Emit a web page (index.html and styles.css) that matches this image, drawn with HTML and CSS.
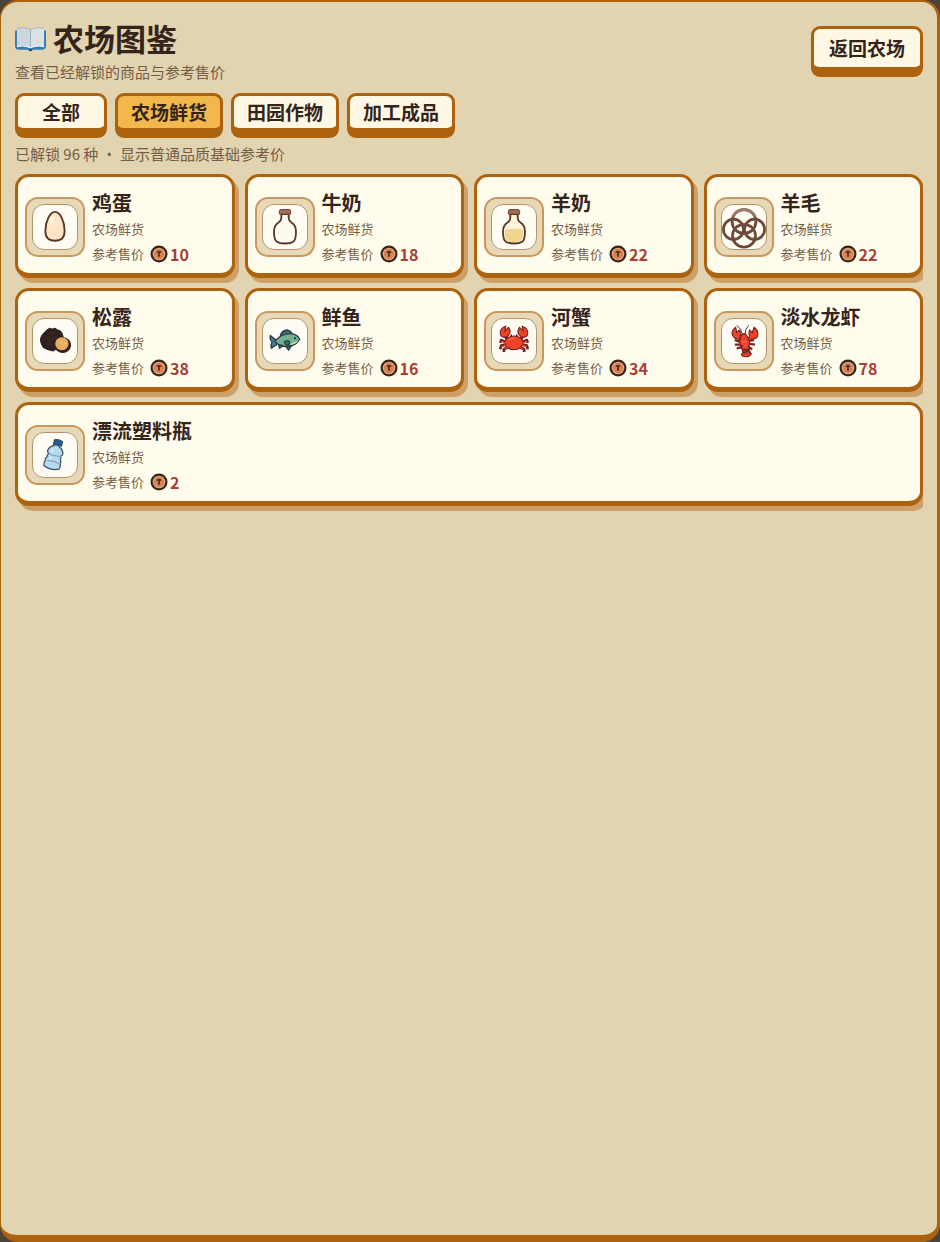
FILE: index.html
```html
<!DOCTYPE html>
<html lang="zh-CN">
<head>
<meta charset="utf-8">
<meta name="viewport" content="width=device-width, initial-scale=1">
<title>农场图鉴</title>
<link rel="stylesheet" href="styles.css">
</head>
<body>
<svg class="defs" aria-hidden="true">
  <symbol id="coin" viewBox="0 0 18 18">
    <circle cx="9" cy="9" r="8.5" fill="#35241a"/>
    <circle cx="9" cy="9" r="6.300" fill="#e9a777"/>
    <circle cx="9" cy="9" r="4.700" fill="#dc8259" stroke="#c06f4a" stroke-width=".6"/>
    <path d="M6.300 8q.2-2.200 2.700-2.200t2.700 2.200q-1-.5-1.800 0v3.700H8.100V8q-.8-.5-1.800 0z" fill="#54301f"/>
  </symbol>
</svg>
<main class="panel">
  <header class="header">
    <div class="heading">
      <h1 class="title">
        <svg class="book" viewBox="0 0 32 28" aria-hidden="true">
          <path d="M1 5Q0 5 0 7v14q0 4 4 4h9q3 2 6 0h9q4 0 4-4V7q0-2-1-2z" fill="#347fae"/>
          <path d="M14.500 24.500h3v2h-3z" fill="#204f70"/>
          <path d="M2 3Q9 1 16 4v19Q9 20 2 22z" fill="#cdd6df"/>
          <path d="M30 3Q23 1 16 4v19q7-3 14-1z" fill="#dae1e7"/>
          <path d="M2 22q7-2 14 1 7-3 14-1" fill="none" stroke="#f0f4f7" stroke-width="1.200"/>
          <path d="M16 4v18M2 3Q9 1 16 4q7-3 14-1" fill="none" stroke="#9aabb8" stroke-width=".8"/>
        </svg>
        <span>农场图鉴</span>
      </h1>
      <p class="subtitle">查看已经解锁的商品与参考售价</p>
    </div>
    <button class="button button-back" type="button">返回农场</button>
  </header>
  <nav class="tabs" aria-label="商品分类">
    <button class="button" type="button">全部</button>
    <button class="button button-active" type="button" aria-pressed="true">农场鲜货</button>
    <button class="button" type="button">田园作物</button>
    <button class="button" type="button">加工成品</button>
  </nav>
  <p class="summary">已解锁 96 种 ・ 显示普通品质基础参考价</p>
  <section class="cards">
    <article class="card">
      <div class="frame"><svg class="icon" viewBox="0 0 48 48" aria-hidden="true">
        <path d="M24 7.500C18 7.500 13.500 19 13.500 28c0 8 4 11 10.500 11s10.500-3 10.500-11C34.500 19 30 7.500 24 7.500z" fill="#fde5c6" stroke="#5b3427" stroke-width="2"/>
        <path d="M19 17q2-5 4-5 1 5-5 12z" fill="#fff8e9"/>
      </svg></div>
      <div class="info"><h2 class="name">鸡蛋</h2><p class="kind">农场鲜货</p><p class="price">参考售价<svg class="coin"><use href="#coin"/></svg><strong>10</strong></p></div>
    </article>
    <article class="card">
      <div class="frame"><svg class="icon" viewBox="0 0 48 48" aria-hidden="true">
        <path d="M20 10v4q0 3-3 5-5 3-5 10 0 9 3 11 3 2 9 2t9-2q3-2 3-11 0-7-5-10-3-2-3-5v-4z" fill="#fffaf0" stroke="#5b3427" stroke-width="2"/>
        <path d="M19.500 5h9q2.500 0 1.500 5H18q-1-5 1.500-5z" fill="#a56e58" stroke="#64392b"/>
      </svg></div>
      <div class="info"><h2 class="name">牛奶</h2><p class="kind">农场鲜货</p><p class="price">参考售价<svg class="coin"><use href="#coin"/></svg><strong>18</strong></p></div>
    </article>
    <article class="card">
      <div class="frame"><svg class="icon" viewBox="0 0 48 48" aria-hidden="true">
        <path d="M20 10v4q0 3-3 5-5 3-5 10 0 9 3 11 3 2 9 2t9-2q3-2 3-11 0-7-5-10-3-2-3-5v-4z" fill="#fff5da"/>
        <path d="M14 27q10-2 20 0 0 10-2 12-8 3-16 0-2-2-2-12z" fill="#f1d68e"/>
        <path d="M20 10v4q0 3-3 5-5 3-5 10 0 9 3 11 3 2 9 2t9-2q3-2 3-11 0-7-5-10-3-2-3-5v-4z" fill="none" stroke="#5b3427" stroke-width="2"/>
        <path d="M19.500 5h9q2.500 0 1.500 5H18q-1-5 1.500-5z" fill="#a56e58" stroke="#64392b"/>
      </svg></div>
      <div class="info"><h2 class="name">羊奶</h2><p class="kind">农场鲜货</p><p class="price">参考售价<svg class="coin"><use href="#coin"/></svg><strong>22</strong></p></div>
    </article>
    <article class="card">
      <div class="frame"><svg class="icon" viewBox="0 0 48 48" aria-hidden="true">
        <g fill="none" stroke="#6d4938" stroke-width="3">
          <circle cx="24" cy="18" r="13"/><circle cx="12.500" cy="26.500" r="11"/><circle cx="35.500" cy="26.500" r="11"/><circle cx="24" cy="33.500" r="12.500"/>
        </g>
        <path d="M12 13q3-8 12-8t12 8" fill="none" stroke="#9a7c69" stroke-width="3"/>
      </svg></div>
      <div class="info"><h2 class="name">羊毛</h2><p class="kind">农场鲜货</p><p class="price">参考售价<svg class="coin"><use href="#coin"/></svg><strong>22</strong></p></div>
    </article>
    <article class="card">
      <div class="frame"><svg class="icon" viewBox="0 0 48 48" aria-hidden="true">
        <path d="M15 12l3-2 3 1 3-1 3 2 3 1 2 3 1 4 1 4-2 4-3 4-4 1-3 2-4-1-3-1-4-2-2-4-1-4 1-4 2-3z" fill="#30211f" stroke="#231917"/>
        <path d="M15 15l3 1 3-2 3 2M12 22l3-1 3 2 4-2 3 1M15 28l3-1 3 2" fill="none" stroke="#443230" stroke-width=".8"/>
        <ellipse cx="32.500" cy="28.500" rx="9" ry="8.500" fill="#352018"/>
        <ellipse cx="31.500" cy="27" rx="7.300" ry="7" fill="#e9ad62"/>
        <path d="M28 25l3 2 1-4M33 30l1-4 3 1" fill="none" stroke="#f7cd8d" stroke-width=".7"/>
      </svg></div>
      <div class="info"><h2 class="name">松露</h2><p class="kind">农场鲜货</p><p class="price">参考售价<svg class="coin"><use href="#coin"/></svg><strong>38</strong></p></div>
    </article>
    <article class="card">
      <div class="frame"><svg class="icon" viewBox="0 0 48 48" aria-hidden="true">
        <g stroke="#293b46" stroke-width="1.400" stroke-linejoin="round">
          <path d="M19 18q1-5 7-6 5 1 6 5z" fill="#456f83"/>
          <path d="M14 23l-6-5q-1 5 2 7-2 3-1 7l6-4z" fill="#50799a"/>
          <path d="M13 24q8-9 18-8 7 1 9 6-4 8-15 8-8 0-12-6z" fill="#72b18b"/>
          <path d="M25 30l3 4 3-5z" fill="#456f83"/>
          <path d="M17 28l1 4 4-3z" fill="#456f83"/>
          <path d="M23 25q4-3 6 0 0 4-4 3z" fill="#456f83"/>
        </g>
        <path d="M29 28q5-4 10-4-4 4-10 4z" fill="#d6dab4"/>
        <circle cx="35" cy="21" r="1.200" fill="#192c31"/>
      </svg></div>
      <div class="info"><h2 class="name">鲜鱼</h2><p class="kind">农场鲜货</p><p class="price">参考售价<svg class="coin"><use href="#coin"/></svg><strong>16</strong></p></div>
    </article>
    <article class="card">
      <div class="frame"><svg class="icon" viewBox="0 0 48 48" aria-hidden="true">
        <g fill="none" stroke="#712324" stroke-width="3" stroke-linejoin="round">
          <path d="M15 25l-5-2-1 3M14 28l-4 1-1 4M17 31l-4 2v3M33 25l5-2 1 3M34 28l4 1 1 4M31 31l4 2v3"/>
          <path d="M17 22l-4-4M31 22l4-4"/>
        </g>
        <g fill="#ef4229" stroke="#762322" stroke-width="1.200">
          <path d="M14 20q-5 0-5-5 0-5 6-7l-1 5 4-4q4 6-1 10zM34 20q5 0 5-5 0-5-6-7l1 5-4-4q-4 6 1 10z"/>
          <ellipse cx="24" cy="26" rx="10" ry="7.500"/>
        </g>
        <path d="M10 24l4 2M10 30l5-1M14 33l3-2M38 24l-4 2M38 30l-5-1M34 33l-3-2" stroke="#ef4229" stroke-width="1.300"/>
        <path d="M21 19v-2M27 19v-2" stroke="#34191b" stroke-width="1.700"/>
        <path d="M18 23q3-3 7-2" fill="none" stroke="#ff8063"/>
      </svg></div>
      <div class="info"><h2 class="name">河蟹</h2><p class="kind">农场鲜货</p><p class="price">参考售价<svg class="coin"><use href="#coin"/></svg><strong>34</strong></p></div>
    </article>
    <article class="card">
      <div class="frame"><svg class="icon" viewBox="0 0 48 48" aria-hidden="true">
        <path d="M22 18q0-7-6-11M25 18q0-7 4-11" fill="none" stroke="#492c2b"/>
        <path d="M20 25l-6-2M20 28l-6 0M21 31l-5 1M28 24l7-1M29 27l7 1M28 30l5 3" stroke="#7b2523" stroke-width="2.400"/>
        <g fill="#ef4229" stroke="#762322" stroke-width="1.200" stroke-linejoin="round">
          <path d="M20 23l-6-2q-5-5-2-9l3-3 1 6 3-3q3 5 0 8l2 2zM28 22l2-3q-1-4 0-7l3 3 2-6q5 4 4 9-1 4-7 4l-3 2z"/>
          <path d="M21 18q3-4 6 0l3 6-1 8h-8l-2-7z"/>
          <path d="M21 29h8l1 5h-8zM22 33h8v4h-7zM23 36l-2 3q2 3 6 2 4 0 5-3l-2-3z"/>
        </g>
        <path d="M22 25h5M23 29h5" stroke="#ff8063"/>
      </svg></div>
      <div class="info"><h2 class="name">淡水龙虾</h2><p class="kind">农场鲜货</p><p class="price">参考售价<svg class="coin"><use href="#coin"/></svg><strong>78</strong></p></div>
    </article>
    <article class="card card-wide">
      <div class="frame"><svg class="icon" viewBox="0 0 48 48" aria-hidden="true">
        <g transform="rotate(14 24 24)" stroke="#364f61" stroke-width="1.400" stroke-linejoin="round">
          <path d="M21 12v2q-5 2-6 7 0 2 2 3-2 2-1 4-2 2-1 4-1 3 0 6 9 4 17 0 1-3 0-6 1-2-1-4 1-2-1-4 2-1 2-3-1-5-6-7v-2z" fill="#b6d9ed"/>
          <path d="M19.500 8q4.500-2 9 0v5h-9z" fill="#255b9b"/>
          <path d="M17 24q7 2 14 0M17 32q7-2 14 0" fill="none" stroke="#7da9c4"/>
          <path d="M20 18v4M20 27v3" stroke="#edf8ff"/>
        </g>
      </svg></div>
      <div class="info"><h2 class="name">漂流塑料瓶</h2><p class="kind">农场鲜货</p><p class="price">参考售价<svg class="coin"><use href="#coin"/></svg><strong>2</strong></p></div>
    </article>
  </section>
</main>
</body>
</html>
```
FILE: styles.css
```css
* {
  box-sizing: border-box;
}

body {
  margin: 0;
  background: #4b4339;
  color: #35241a;
  font-family: "Noto Sans CJK SC", sans-serif;
}

h1,
h2,
p {
  margin: 0;
}

.defs {
  position: absolute;
  width: 0;
  height: 0;
}

.panel {
  display: flex;
  flex-direction: column;
  min-height: 100vh;
  padding: 20px 14px;
  border: solid #ad630e;
  border-width: 2px 3px 7px 1px;
  border-radius: 18px;
  background: #e2d3b1;
}

.header {
  display: flex;
  align-items: flex-start;
  justify-content: space-between;
}

.title {
  display: flex;
  align-items: center;
  gap: 7px;
  font-size: 31px;
  line-height: 32px;
}

.book {
  width: 31px;
  height: 28px;
  margin-top: 2px;
}

.subtitle,
.summary {
  color: #755e45;
  font-size: 15px;
  line-height: 20px;
}

.subtitle {
  margin-top: 8px;
}

.button {
  min-width: 92px;
  height: 41px;
  padding: 0 13px;
  border: 3px solid #ad630e;
  border-bottom-width: 6px;
  border-radius: 9px;
  background: #fff8e5;
  box-shadow: 0 4px #ad630e;
  color: #35241a;
  font: inherit;
  font-size: 19px;
  font-weight: 700;
  line-height: 28px;
}

.button-active {
  background: #f2b84b;
}

.button-back {
  height: 47px;
  margin-top: 4px;
  padding: 0 15px;
}

.tabs {
  display: flex;
  flex-wrap: wrap;
  gap: 8px;
  margin-top: 11px;
}

.summary {
  margin: 10px 0;
}

.cards {
  display: grid;
  flex: 1;
  grid-template-columns: repeat(4, minmax(0, 1fr));
  align-content: start;
  gap: 10px;
  overflow: hidden;
}

.card {
  display: flex;
  align-items: center;
  gap: 7px;
  min-height: 104px;
  padding: 10px 7px 7px;
  border: 3px solid #ad630e;
  border-bottom-width: 5px;
  border-radius: 14px;
  background: #fffbed;
  box-shadow: 4px 5px #cca066;
}

.card-wide {
  grid-column: 1 / -1;
}

.frame {
  display: grid;
  flex: none;
  place-items: center;
  width: 60px;
  height: 60px;
  border: 2px solid #c8985e;
  border-radius: 13px;
  background: #e7d9b8;
}

.icon {
  width: 46px;
  height: 46px;
  border: 1px solid #b59469;
  border-radius: 12px;
  background: #fffcf3;
  overflow: visible;
}

.info {
  padding-top: 3px;
}

.name {
  font-size: 20px;
  line-height: 26px;
}

.kind,
.price {
  color: #755e45;
  font-size: 13px;
}

.kind {
  margin: 4px 0;
  line-height: 18px;
}

.price {
  display: flex;
  align-items: center;
  line-height: 24px;
}

.coin {
  width: 18px;
  height: 18px;
  margin: 0 2px 0 6px;
}

.price strong {
  color: #a63f35;
  font-size: 16px;
}
```
